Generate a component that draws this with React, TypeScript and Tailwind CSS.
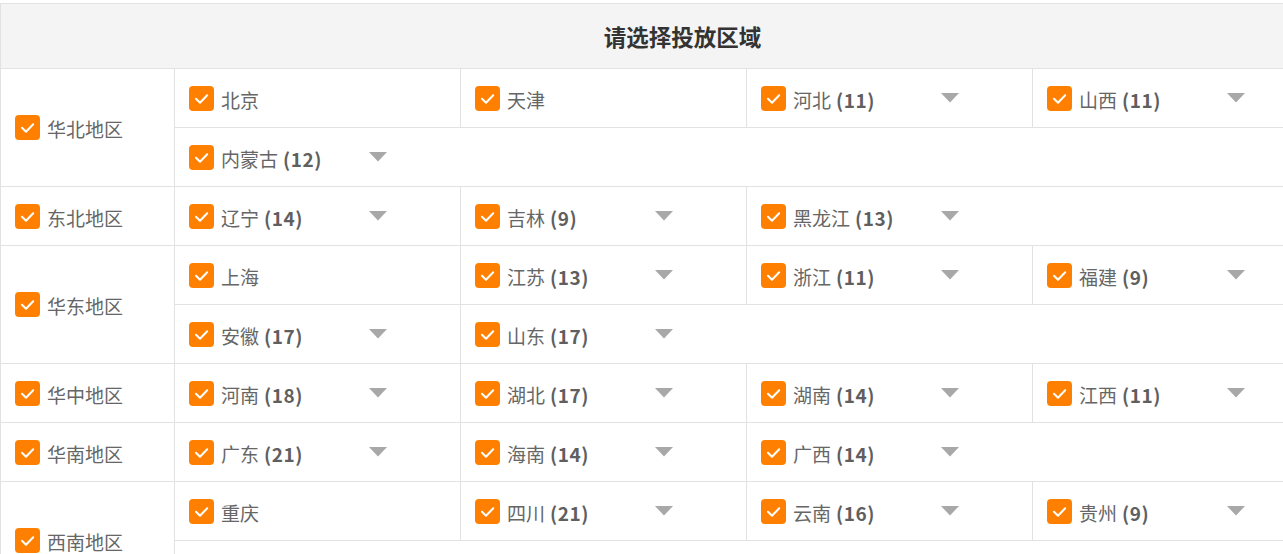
import React from 'react';

type Prov = { name: string; count?: number };
type Region = { name: string; rows: Prov[][] };

const regions: Region[] = [
	{
		name: '华北地区',
		rows: [
			[{ name: '北京' }, { name: '天津' }, { name: '河北', count: 11 }, { name: '山西', count: 11 }],
			[{ name: '内蒙古', count: 12 }],
		],
	},
	{
		name: '东北地区',
		rows: [[{ name: '辽宁', count: 14 }, { name: '吉林', count: 9 }, { name: '黑龙江', count: 13 }]],
	},
	{
		name: '华东地区',
		rows: [
			[{ name: '上海' }, { name: '江苏', count: 13 }, { name: '浙江', count: 11 }, { name: '福建', count: 9 }],
			[{ name: '安徽', count: 17 }, { name: '山东', count: 17 }],
		],
	},
	{
		name: '华中地区',
		rows: [[{ name: '河南', count: 18 }, { name: '湖北', count: 17 }, { name: '湖南', count: 14 }, { name: '江西', count: 11 }]],
	},
	{
		name: '华南地区',
		rows: [[{ name: '广东', count: 21 }, { name: '海南', count: 14 }, { name: '广西', count: 14 }]],
	},
	{
		name: '西南地区',
		rows: [
			[{ name: '重庆' }, { name: '四川', count: 21 }, { name: '云南', count: 16 }, { name: '贵州', count: 9 }],
			[{ name: '西藏', count: 7 }],
		],
	},
];

const Check = () => (
	<span className="flex h-[25px] w-[25px] shrink-0 items-center justify-center rounded-[4px] bg-[#ff8000]">
		<svg viewBox="0 0 25 25" className="h-[25px] w-[25px]" fill="none">
			<path d="M7 12.8l4 4 7.2-7.6" stroke="#fff" strokeWidth="2" strokeLinecap="round" strokeLinejoin="round" />
		</svg>
	</span>
);

const Arrow = () => (
	<svg viewBox="0 0 18 10" className="h-[10px] w-[18px] shrink-0">
		<path d="M0 0h18L9 9.5z" fill="#a8a8a8" />
	</svg>
);

const ProvCell = ({ prov, last }: { prov: Prov; last: boolean }) => (
	<div className={`flex h-full w-[286px] shrink-0 items-center pl-[14px] ${last ? '' : 'border-r border-[#e2e2e2]'}`}>
		<Check />
		<span className="ml-[7px] w-[148px] shrink-0 whitespace-nowrap pt-[2px] text-[#666]">
			{prov.name}
			{prov.count !== undefined && (
				<span className="ml-[5px] font-bold tracking-[0.5px] text-[#5f5f5f]">({prov.count})</span>
			)}
		</span>
		{prov.count !== undefined && <Arrow />}
	</div>
);

const RegionRow = ({ region }: { region: Region }) => (
	<div className="flex border-b border-[#e2e2e2]">
		<div className="flex w-[174px] shrink-0 items-center border-r border-[#e2e2e2] pl-[14px]">
			<Check />
			<span className="ml-[7px] pt-[2px] text-[#666]">{region.name}</span>
		</div>
		<div className="flex flex-1 flex-col">
			{region.rows.map((row, i) => (
				<div
					key={i}
					className={`flex ${i < region.rows.length - 1 ? 'h-[59px] border-b border-[#e2e2e2]' : 'h-[58px]'}`}
				>
					{row.map((p, j) => (
						<ProvCell key={p.name} prov={p} last={j === row.length - 1} />
					))}
				</div>
			))}
		</div>
	</div>
);

export default function App() {
	return (
		<div
			className="h-[554px] w-full overflow-hidden bg-white pt-[3px] text-[19px] leading-none"
			style={{ fontFamily: '"Noto Sans CJK SC", "Noto Sans", sans-serif' }}
		>
			<div className="w-[1365px] border border-[#e2e2e2]">
				<div className="flex h-[65px] items-center justify-center border-b border-[#e2e2e2] bg-[#f4f4f4] text-[22.5px] font-bold text-[#333]">
					请选择投放区域
				</div>
				{regions.map((r) => (
					<RegionRow key={r.name} region={r} />
				))}
			</div>
		</div>
	);
}
